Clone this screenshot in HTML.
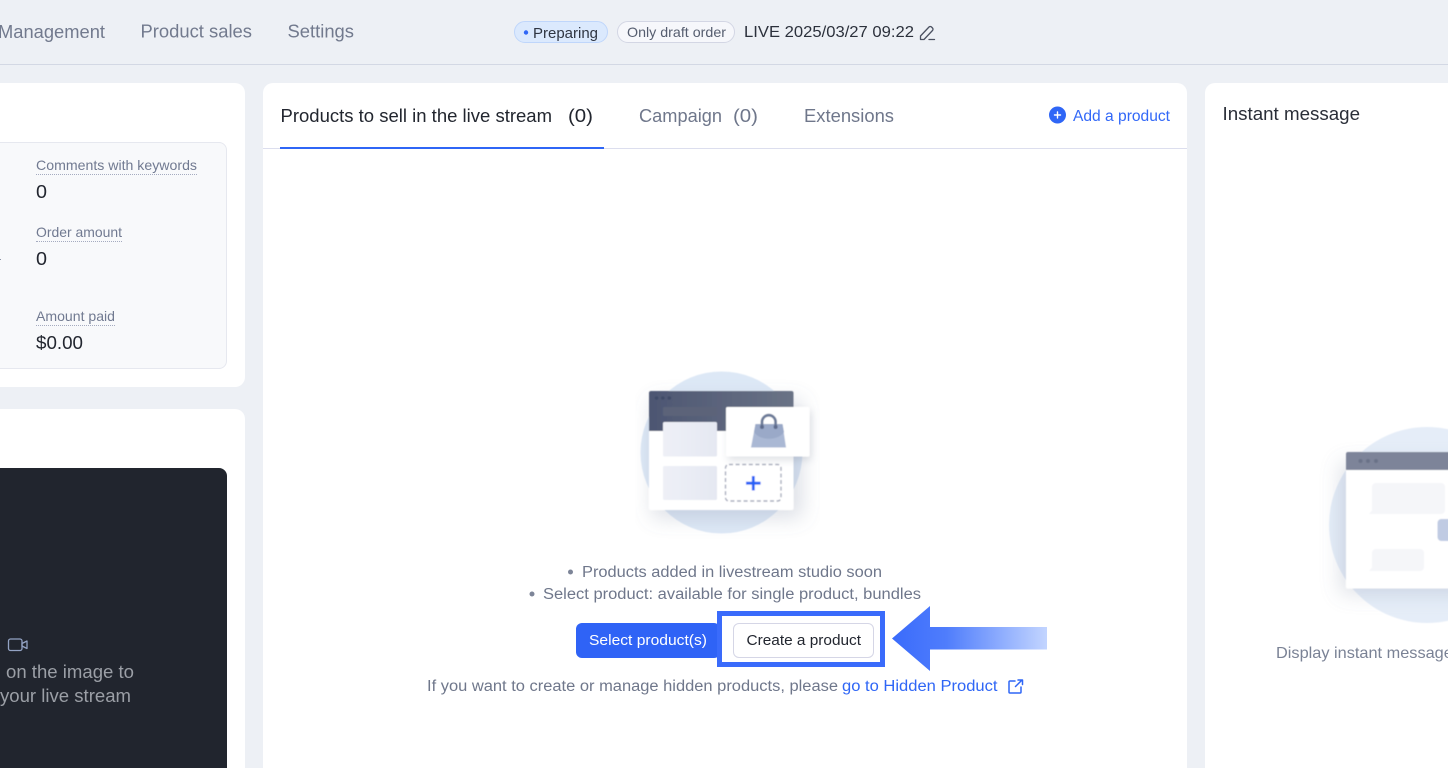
<!DOCTYPE html>
<html lang="en">
<head>
<meta charset="utf-8">
<title>Live stream studio</title>
<style>
html,body{margin:0;padding:0;width:1448px;height:768px;overflow:hidden;background:#edf0f5}
body{position:relative;font-family:"Liberation Sans",sans-serif}
.b{position:absolute;box-sizing:border-box}
.card{background:#fff;border-radius:10px}
svg{position:absolute;left:0;top:0}
text{font-family:"Liberation Sans",sans-serif}
</style>
</head>
<body>
<div class="b" style="left:0;top:64px;width:1448px;height:1px;background:#d3d8e4"></div>
<div class="b" style="left:514px;top:21px;width:94px;height:22px;border-radius:11px;background:#dbe9fd;border:1px solid #bfd6fb"></div>
<div class="b" style="left:617px;top:21px;width:118px;height:22px;border-radius:11px;background:#f6f7fb;border:1px solid #d3d6e4"></div>

<div class="b card" style="left:-20px;top:83px;width:265px;height:304px"></div>
<div class="b card" style="left:-20px;top:409px;width:265px;height:380px"></div>
<div class="b card" style="left:263px;top:83px;width:924px;height:700px"></div>
<div class="b card" style="left:1205px;top:83px;width:270px;height:700px"></div>

<div class="b" style="left:-20px;top:142px;width:247px;height:227px;background:#f8f9fb;border:1px solid #e6e8ef;border-radius:8px"></div>
<div class="b" style="left:-20px;top:468px;width:247px;height:320px;background:#21252e;border-radius:8px"></div>

<div class="b" style="left:36px;top:174px;width:161px;border-top:1px dotted #a5abc0"></div>
<div class="b" style="left:36px;top:241px;width:86px;border-top:1px dotted #a5abc0"></div>
<div class="b" style="left:36px;top:325px;width:79px;border-top:1px dotted #a5abc0"></div>

<div class="b" style="left:263px;top:148px;width:924px;height:1px;background:#dcdeee"></div>
<div class="b" style="left:280px;top:147px;width:324px;height:2px;background:#2f66f6"></div>

<div class="b" style="left:576px;top:623px;width:144px;height:35px;border-radius:6px;background:#2f63f6"></div>
<div class="b" style="left:733px;top:623px;width:141px;height:35px;border-radius:6px;background:#fff;border:1px solid #d5d6e6"></div>
<div class="b" style="left:717px;top:611px;width:168px;height:56px;border:5px solid #3a6bfb"></div>

<svg width="1448" height="768" viewBox="0 0 1448 768">
<defs>
<linearGradient id="ag" x1="0" x2="1" y1="0" y2="0"><stop offset="0" stop-color="#3a6bfb"/><stop offset=".35" stop-color="#4f7dfc"/><stop offset="1" stop-color="#c3d5ff"/></linearGradient>
<linearGradient id="hd" x1="0" x2="1" y1="0" y2="0"><stop offset="0" stop-color="#4d5672"/><stop offset="1" stop-color="#6a7386"/></linearGradient>
<linearGradient id="cd" x1="0" x2="1" y1="0" y2="0"><stop offset="0" stop-color="#eef0f7"/><stop offset="1" stop-color="#e5e8f2"/></linearGradient>
<filter id="sh" x="-30%" y="-30%" width="160%" height="160%"><feGaussianBlur stdDeviation="10"/></filter>
<filter id="sh2" x="-20%" y="-20%" width="140%" height="140%"><feGaussianBlur stdDeviation="4"/></filter>
<filter id="soft" x="-5%" y="-5%" width="110%" height="110%"><feGaussianBlur stdDeviation="0.4"/></filter>
</defs>

<!-- top nav -->
<g font-size="18" fill="#727a8e">
<text x="-2" y="38" textLength="107" lengthAdjust="spacingAndGlyphs">Management</text>
<text x="140.500" y="37.500" textLength="111.500" lengthAdjust="spacingAndGlyphs">Product sales</text>
<text x="287.500" y="37.500" textLength="66.500" lengthAdjust="spacingAndGlyphs">Settings</text>
</g>
<circle cx="526" cy="32.500" r="2.200" fill="#2f66f6"/>
<text x="533" y="38" font-size="15" fill="#2f3542" textLength="65" lengthAdjust="spacingAndGlyphs">Preparing</text>
<text x="627" y="37" font-size="13.800" fill="#555d6f" textLength="99" lengthAdjust="spacingAndGlyphs">Only draft order</text>
<text x="744" y="37" font-size="15.500" fill="#2b303b" textLength="170" lengthAdjust="spacingAndGlyphs">LIVE 2025/03/27 09:22</text>
<g fill="none" stroke="#4b5161" stroke-width="1.300" stroke-linejoin="round" stroke-linecap="round">
<path d="M920.500 39.500v-3.500l8.500-9a1.800 1.800 0 0 1 2.500 0l1 1a1.800 1.800 0 0 1 0 2.500l-8.500 9z"/>
<path d="M929 39.500h5.500"/>
</g>

<!-- stats -->
<g font-size="13.800" fill="#717a91">
<text x="36" y="170" textLength="161" lengthAdjust="spacingAndGlyphs">Comments with keywords</text>
<text x="36" y="237" textLength="86" lengthAdjust="spacingAndGlyphs">Order amount</text>
<text x="36" y="321" textLength="79" lengthAdjust="spacingAndGlyphs">Amount paid</text>
</g>
<g font-size="18" fill="#22262f">
<text x="36" y="198" textLength="11" lengthAdjust="spacingAndGlyphs">0</text>
<text x="36" y="265" textLength="11" lengthAdjust="spacingAndGlyphs">0</text>
<text x="36" y="349" textLength="47" lengthAdjust="spacingAndGlyphs">$0.00</text>
</g>
<rect x="0" y="259" width="1" height="1" fill="#8d93a5"/>

<!-- dark video box -->
<g fill="none" stroke="#93a3c4" stroke-width="1.300" stroke-linejoin="round">
<rect x="8.500" y="639" width="13.500" height="11.500" rx="2"/>
<path d="M22 643.500l5-2.500v7.500l-5-2.500z"/>
</g>
<g font-size="18.500" fill="#9b9fa6">
<text x="6" y="678" textLength="128" lengthAdjust="spacingAndGlyphs">on the image to</text>
<text x="0" y="702" textLength="131" lengthAdjust="spacingAndGlyphs">your live stream</text>
</g>

<!-- tabs -->
<g font-size="18.500">
<text x="280.500" y="122" fill="#22262f" textLength="271.500" lengthAdjust="spacingAndGlyphs">Products to sell in the live stream</text>
<text x="568" y="122" fill="#22262f" textLength="25" lengthAdjust="spacingAndGlyphs">(0)</text>
<text x="639" y="122" fill="#6f778b" textLength="83" lengthAdjust="spacingAndGlyphs">Campaign</text>
<text x="733" y="122" fill="#6f778b" textLength="25" lengthAdjust="spacingAndGlyphs">(0)</text>
<text x="804" y="122" fill="#6f778b" textLength="90" lengthAdjust="spacingAndGlyphs">Extensions</text>
</g>
<circle cx="1057.500" cy="115" r="8.500" fill="#2f66f6"/>
<path d="M1057.500 112v6M1054.500 115h6" stroke="#fff" stroke-width="1.400" stroke-linecap="round"/>
<text x="1073" y="121" font-size="15.300" fill="#3268f8" textLength="97" lengthAdjust="spacingAndGlyphs">Add a product</text>
<text x="1222.500" y="120" font-size="18.500" fill="#2a2e38" textLength="137.500" lengthAdjust="spacingAndGlyphs">Instant message</text>

<!-- product illustration -->
<g filter="url(#soft)">
<circle cx="721.500" cy="452.500" r="81" fill="#dde8f6"/>
<rect x="652" y="400" width="150" height="118" fill="#8d97ad" opacity=".3" filter="url(#sh)"/>
<rect x="649" y="391" width="144.500" height="119" rx="2" fill="#fff"/>
<path d="M649 431v-38a2 2 0 0 1 2-2h140.500a2 2 0 0 1 2 2v38z" fill="url(#hd)"/>
<g fill="#414b68"><circle cx="656.500" cy="398" r="1.800"/><circle cx="662.800" cy="398" r="1.800"/><circle cx="669.300" cy="398" r="1.800"/></g>
<rect x="663" y="407" width="54" height="9" rx="1" fill="#5b6479"/>
<rect x="663" y="422" width="54" height="34.500" rx="1.500" fill="url(#cd)"/>
<rect x="663" y="466" width="54" height="34" rx="1.500" fill="url(#cd)"/>
<rect x="728" y="411" width="83" height="49" fill="#6b748a" opacity=".22" filter="url(#sh2)"/>
<rect x="726" y="407" width="83.500" height="49.500" rx="1.500" fill="#fff"/>
<path d="M755.500 424h27l3.500 23.500h-35z" fill="#aab8d4"/>
<path d="M754 432l1.500-8h27l1.500 8c-6 9-24 9-30 0z" fill="#9aa9c8"/>
<path d="M762 427v-5a6.800 6.800 0 0 1 13.600 0v5" fill="none" stroke="#6c7a98" stroke-width="2.800"/>
<circle cx="762" cy="427" r="2" fill="#5d6b8b"/><circle cx="775.600" cy="427" r="2" fill="#5d6b8b"/>
<rect x="725.500" y="464.500" width="55.500" height="36.500" rx="3.500" fill="#fff" stroke="#a9adbd" stroke-width="1.400" stroke-dasharray="4 2.600"/>
<path d="M753.300 476v14.500M746 483.200h14.600" stroke="#2560f6" stroke-width="2.800"/>
</g>

<!-- notes -->
<g font-size="15.300" fill="#6f778b">
<circle cx="570.500" cy="572" r="2.500" fill="#7d8598"/>
<text x="582" y="577" textLength="300" lengthAdjust="spacingAndGlyphs">Products added in livestream studio soon</text>
<circle cx="532" cy="594" r="2.500" fill="#7d8598"/>
<text x="543" y="599" textLength="378" lengthAdjust="spacingAndGlyphs">Select product: available for single product, bundles</text>
<text x="427" y="691" textLength="411" lengthAdjust="spacingAndGlyphs">If you want to create or manage hidden products, please</text>
<text x="842" y="691" fill="#2f66f6" textLength="155.500" lengthAdjust="spacingAndGlyphs">go to Hidden Product</text>
</g>
<text x="589" y="645" font-size="14.800" fill="#fff" textLength="118" lengthAdjust="spacingAndGlyphs">Select product(s)</text>
<text x="746.500" y="645" font-size="14.800" fill="#22262f" textLength="114.500" lengthAdjust="spacingAndGlyphs">Create a product</text>
<g fill="none" stroke="#2f66f6" stroke-width="1.500" stroke-linecap="round" stroke-linejoin="round">
<path d="M1015 681h-5a1 1 0 0 0-1 1v10a1 1 0 0 0 1 1h10a1 1 0 0 0 1-1v-5"/>
<path d="M1015.500 686.500l6.500-6.500M1018 680h4.500v4.500"/>
</g>

<!-- arrow -->
<path d="M892 638.500L930 606v21h117v22.500H930V671z" fill="url(#ag)"/>

<!-- right illustration -->
<g filter="url(#soft)">
<circle cx="1427" cy="525" r="98" fill="#e5edf8"/>
<rect x="1340" y="462" width="130" height="132" fill="#8d97ad" opacity=".28" filter="url(#sh)"/>
<rect x="1346" y="452" width="120" height="136.500" rx="2" fill="#fff"/>
<path d="M1346 470v-16a2 2 0 0 1 2-2h118v18z" fill="#7d8499"/>
<g fill="#6b7288"><circle cx="1360.500" cy="461" r="2"/><circle cx="1368" cy="461" r="2"/><circle cx="1376" cy="461" r="2"/></g>
<path d="M1376 483h65a4 4 0 0 1 4 4v23a4 4 0 0 1-4 4h-72l3-3.500v-23.500a4 4 0 0 1 4-4z" fill="#f5f6f9"/>
<rect x="1437.500" y="519" width="30" height="22" rx="4" fill="#c0cbe3"/>
<path d="M1376 549h44a4 4 0 0 1 4 4v14a4 4 0 0 1-4 4h-51l3-3.500v-14.500a4 4 0 0 1 4-4z" fill="#f5f6f9"/>
</g>
<text x="1276" y="658" font-size="15.800" fill="#7a8295" textLength="185" lengthAdjust="spacingAndGlyphs">Display instant messages</text>
</svg>
</body>
</html>
